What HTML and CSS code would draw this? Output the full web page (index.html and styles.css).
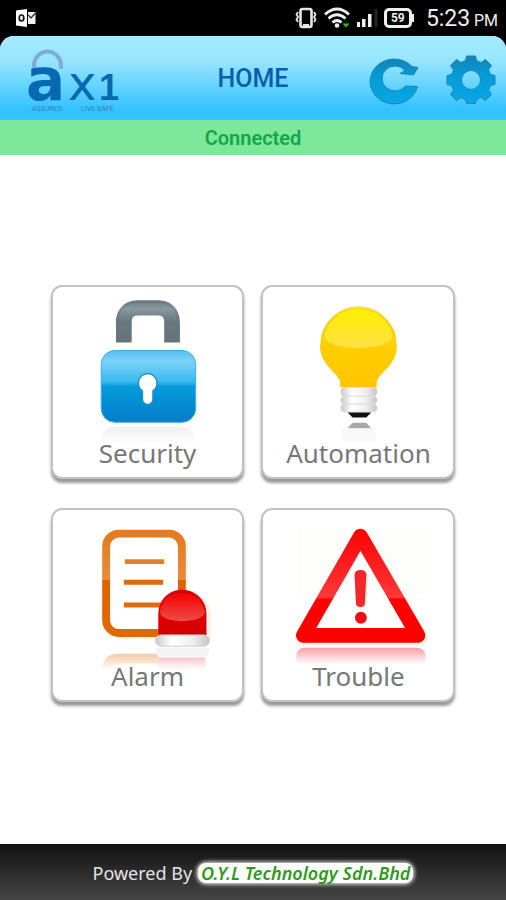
FILE: index.html
```html
<!DOCTYPE html>
<html lang="en">
<head>
<meta charset="utf-8">
<meta name="viewport" content="width=device-width, initial-scale=1">
<title>Home</title>
<link rel="stylesheet" href="styles.css">
</head>
<body>
<div class="status">
  <svg class="status-mail" width="20" height="20" viewBox="0 0 20 20" aria-hidden="true">
    <path d="M0 2.500L11 1v18L0 17.500z" fill="#fff"/>
    <path d="M12 4h7.500v12H12z" fill="#eee"/>
    <path d="M12 7l3 3 4.500-5" fill="none" stroke="#222" stroke-width="1.200"/>
    <ellipse cx="5.500" cy="10" rx="2.300" ry="3" fill="none" stroke="#111" stroke-width="1.700"/>
  </svg>
  <svg width="24" height="22" viewBox="0 0 24 22" aria-hidden="true" fill="none" stroke="#e6e6e6">
    <rect x="6.500" y="2" width="11" height="18" rx="2" stroke-width="2.600"/>
    <path d="M9 18.500h6" stroke-width="3"/>
    <path d="M4 5L2.500 7.500 4 10l-1.500 2.500L4 15M20 5l1.500 2.500L20 10l1.500 2.500L20 15" stroke-width="1.800"/>
  </svg>
  <svg width="26" height="22" viewBox="0 0 26 22" aria-hidden="true" fill="none" stroke="#eee" stroke-width="2.800">
    <path d="M1 7.500Q13-3.500 25 7.500M4.500 11.500Q13 4 21.500 11.500M8.500 15.500Q13 11.500 17.500 15.500"/>
    <circle cx="13" cy="18.500" r="2.300" fill="#eee" stroke="none"/>
    <path d="M18.500 16.500h7L22 20.500z" fill="#2ec516" stroke="none"/>
  </svg>
  <svg width="22" height="22" viewBox="0 0 22 22" aria-hidden="true" fill="#eee">
    <path d="M1 15h3v5H1zM6 12h3.500v8H6zM12 7h3.500v13H12z"/>
    <path d="M18.500 2h3v18h-3z" fill="#252525"/>
  </svg>
  <span class="battery">59</span>
  <span class="clock">5:23 <small>PM</small></span>
</div>

<header class="bar">
  <svg class="logo" width="96" height="64" viewBox="0 0 96 64" role="img" aria-label="ax1 logo">
    <path d="M10 20v-3a13 14 0 0 1 27 0v3" fill="none" stroke="#7fa9dc" stroke-width="4"/>
    <text class="logo-a" x="2" y="51">a</text>
    <text class="logo-x" x="44" y="51">x</text>
    <text class="logo-one" x="75" y="51">1</text>
    <text class="logo-tag" x="8" y="62">ASSURED</text>
    <text class="logo-tag" x="57" y="62">LIVE SAFE</text>
  </svg>
  <h1 class="title">HOME</h1>
  <div class="actions">
    <button class="action" type="button" aria-label="Refresh">
      <svg viewBox="0 0 50 50" aria-hidden="true">
        <defs>
          <linearGradient id="metal" x1="0" y1="0" x2="0" y2="1">
            <stop offset="0" stop-color="#1482b5"/><stop offset=".4" stop-color="#069bd5"/><stop offset="1" stop-color="#07a7e6"/>
          </linearGradient>
        </defs>
        <path d="M48.500 31.500A24 22.500 0 1 1 43 11.500L49 12.500L44.500 20L31 18.500L36 15.500A13 12.500 0 1 0 36.500 31z" fill="url(#metal)" stroke="#1589bd"/>
      </svg>
    </button>
    <button class="action" type="button" aria-label="Settings">
      <svg viewBox="0 0 50 50" aria-hidden="true">
        <path fill-rule="evenodd" fill="url(#metal)" stroke="#1589bd" d="M20.500 1h9l1 4.500 4.500 2 4.500-3 6 6-3 4.500 2 4.500 4.500 1v9l-4.500 1-2 4.500 3 4.500-6 6-4.500-3-4.500 2-1 4h-9l-1-4-4.500-2-4.500 3-6-6 3-4.500-2-4.500-4.500-1v-9l4.500-1 2-4.500-3-4.500 6-6 4.500 3 4.500-2zM25 15.500a9.500 9.500 0 1 0 0 19a9.500 9.500 0 1 0 0-19z"/>
      </svg>
    </button>
  </div>
</header>
<p class="connection" role="status">Connected</p>

<main class="content">
  <div class="tiles">
    <button class="tile" type="button">
      <svg viewBox="0 0 193 193" aria-hidden="true">
        <defs>
          <linearGradient id="steel" x1="0" y1="0" x2="0" y2="1"><stop offset="0" stop-color="#6b7a84"/><stop offset=".2" stop-color="#89979f"/><stop offset=".5" stop-color="#69777f"/><stop offset="1" stop-color="#65737b"/></linearGradient>
          <linearGradient id="lock" x1="0" y1="0" x2="0" y2="1"><stop offset="0" stop-color="#55bdf0"/><stop offset=".15" stop-color="#7dd3f7"/><stop offset=".44" stop-color="#35b8ec"/><stop offset=".5" stop-color="#049cdb"/><stop offset="1" stop-color="#067cc8"/></linearGradient>
          <linearGradient id="lock-shade" x1="0" y1="0" x2="0" y2="1"><stop offset="0" stop-color="#f0f0f0"/><stop offset="1" stop-color="#fff"/></linearGradient>
        </defs>
        <path d="M64 56.500V36C64 22 73 13.500 87 13.500h19C120 13.500 129 22 129 36v20.500h-16V35q0-6-6-6H86q-6 0-6 6v21.500z" fill="url(#steel)"/>
        <path d="M66 34C67 22 75 15.500 87 15.500h19C118 15.500 126 22 127 34" fill="none" stroke="#5d6a73" stroke-opacity=".6"/>
        <rect x="49" y="64.500" width="96" height="73" rx="14" fill="url(#lock)" stroke="#3daae3"/>
        <path d="M91 105.500a9.500 9.500 0 1 1 10.500 0V114a5.250 5.250 0 0 1-10.500 0z" fill="#fff" stroke="#168dca" stroke-width="1.200"/>
        <path d="M49 160v-6q1-12 14-12h67q13 0 14 12v6z" fill="url(#lock-shade)"/>
      </svg>
      <span class="tile-label">Security</span>
    </button>

    <button class="tile" type="button">
      <svg viewBox="0 0 193 193" aria-hidden="true">
        <defs>
          <linearGradient id="bulb" x1="0" y1="0" x2="0" y2="1"><stop offset="0" stop-color="#ffe600"/><stop offset=".5" stop-color="#ffce00"/><stop offset="1" stop-color="#ffc400"/></linearGradient>
          <linearGradient id="glare" x1="0" y1="0" x2="0" y2="1"><stop offset="0" stop-color="#fff000"/><stop offset="1" stop-color="#ffdf45"/></linearGradient>
          <linearGradient id="ring"><stop offset="0" stop-color="#c8c8c8"/><stop offset=".3" stop-color="#fff"/><stop offset=".7" stop-color="#eee"/><stop offset="1" stop-color="#c4c4c4"/></linearGradient>
        </defs>
        <path d="M78.500 102V96C74 85 58 79 58 60A39 39 0 0 1 136 60C136 79 120 85 115.500 96v6z" fill="url(#bulb)"/>
        <path d="M63 47C68 31 82 23 97 23s29 8 34 24c3 10-14 15-34 15s-37-5-34-15z" fill="url(#glare)"/>
        <path d="M60 50a38 38 0 0 1 74 0" fill="none" stroke="#f3ba00" stroke-opacity=".55" stroke-width="2"/>
        <g fill="url(#ring)" stroke="#dadada" stroke-width=".8">
          <rect x="79" y="102" width="37" height="9" rx="4"/><rect x="79" y="111" width="37" height="8" rx="4"/><rect x="79" y="119" width="37" height="8" rx="4"/>
        </g>
        <path d="M86 127.500h24l-5 5H91z" fill="#111"/>
        <path d="M91 138h14l5 5.500H86z" fill="#aaa"/>
        <path d="M80 144h35v12H80z" fill="#f8f8f8"/>
      </svg>
      <span class="tile-label">Automation</span>
    </button>

    <button class="tile" type="button">
      <svg viewBox="0 0 193 193" aria-hidden="true">
        <defs>
          <linearGradient id="paper" gradientUnits="userSpaceOnUse" x1="0" y1="22" x2="0" y2="130"><stop offset="0" stop-color="#e47a20"/><stop offset=".45" stop-color="#e98a3d"/><stop offset=".46" stop-color="#df6200"/><stop offset="1" stop-color="#e06a08"/></linearGradient>
          <linearGradient id="fade-orange" x1="0" y1="0" x2="0" y2="1"><stop offset="0" stop-color="#f6c9a3"/><stop offset="1" stop-color="#fff"/></linearGradient>
          <linearGradient id="fade-pink" x1="0" y1="0" x2="0" y2="1"><stop offset="0" stop-color="#f8c5cb"/><stop offset="1" stop-color="#fff"/></linearGradient>
          <linearGradient id="siren" x1="0" y1="0" x2="0" y2="1"><stop offset="0" stop-color="#c90000"/><stop offset=".3" stop-color="#ea0000"/><stop offset="1" stop-color="#cf0000"/></linearGradient>
          <linearGradient id="siren-glare" x1="0" y1="0" x2="0" y2="1"><stop offset="0" stop-color="#f50000"/><stop offset="1" stop-color="#ef4b4b"/></linearGradient>
        </defs>
        <rect x="56" y="27" width="78" height="100" rx="12" fill="none" stroke="#f8f6ea" stroke-width="7"/>
        <rect x="54" y="24" width="77" height="101" rx="13" fill="#fff" stroke="url(#paper)" stroke-width="8"/>
        <path d="M73 50h40v5H73z" fill="#e57e2b"/><path d="M72 71h40v5H72zM72 94h40v5H72z" fill="#df6b10"/>
        <path d="M110 127v-20a24 24 0 0 1 49 0v22h2" fill="none" stroke="#f7f3e4" stroke-width="3"/>
        <path d="M107 128v-22C107 91 118 81 131 81s25 10 25 25v22z" fill="url(#siren)"/>
        <path d="M109 102c3-12 11-18 22-18s20 6 23 18c2 7-10 11-23 11s-24-4-22-11z" fill="url(#siren-glare)"/>
        <rect x="104" y="127" width="55" height="11.500" rx="5.700" fill="url(#ring)" stroke="#d2d2d2"/>
        <path d="M50 163c0-8 4-17 15-17h42v10H68z" fill="url(#fade-orange)"/>
        <path d="M104 140h55q0 9-5 9h-45q-5 0-5-9z" fill="#f3f3f3"/>
        <path d="M107 150h48v12h-48z" fill="url(#fade-pink)"/>
      </svg>
      <span class="tile-label">Alarm</span>
    </button>

    <button class="tile" type="button">
      <svg viewBox="0 0 193 193" aria-hidden="true">
        <defs>
          <linearGradient id="warn" gradientUnits="userSpaceOnUse" x1="0" y1="19" x2="0" y2="135"><stop offset="0" stop-color="#f00"/><stop offset=".2" stop-color="#fb1515"/><stop offset=".6" stop-color="#ff3838"/><stop offset=".62" stop-color="#fd0000"/><stop offset="1" stop-color="#fd0000"/></linearGradient>
          <linearGradient id="fade-red" x1="0" y1="0" x2="0" y2="1"><stop offset="0" stop-color="#fa9fa7"/><stop offset="1" stop-color="#fff"/></linearGradient>
        </defs>
        <path d="M35 19h133v65q-66 16-133 0z" fill="#fdfdfb"/>
        <path d="M101 29L160 130H43z" fill="none" stroke="#f4f2e2" stroke-width="15" stroke-linejoin="round"/>
        <path d="M99 26.500L157.500 127.500H41z" fill="#fff" stroke="url(#warn)" stroke-width="15" stroke-linejoin="round"/>
        <path d="M95 66q0-3 6-3t6 3l-2 30q0 3-4 3t-4-3z" fill="#efecd9"/>
        <path d="M93 66q0-5 6-5t6 5l-1.500 29q0 3.500-4.500 3.500t-4.500-3.500z" fill="#f3262c"/>
        <circle cx="99.500" cy="109.500" r="6" fill="#f10c12"/>
        <path d="M34 157v-10q1-7 9-7h113q8 0 9 7v10z" fill="url(#fade-red)"/>
      </svg>
      <span class="tile-label">Trouble</span>
    </button>
  </div>
</main>

<footer class="footer">
  <span>Powered By</span>
  <span class="vendor">O.Y.L Technology Sdn.Bhd</span>
</footer>
</body>
</html>
```
FILE: styles.css
```css
* {
  box-sizing: border-box;
}

body {
  margin: 0;
  min-height: 100vh;
  display: flex;
  flex-direction: column;
  background: #fff;
  font-family: Roboto, "Liberation Sans", sans-serif;
}

button {
  border: 0;
  padding: 0;
  background: none;
  font: inherit;
  cursor: pointer;
}

svg {
  display: block;
}

.status {
  display: flex;
  align-items: center;
  gap: 6px;
  height: 36px;
  padding: 0 8px 0 16px;
  background: #000;
  color: #eee;
}

.status-mail {
  margin-right: auto;
}

.battery {
  position: relative;
  width: 28px;
  height: 20px;
  border: 3px solid #eee;
  border-radius: 5px;
  font-size: 12px;
  font-weight: 700;
  line-height: 14px;
  text-align: center;
}

.battery::after {
  content: "";
  position: absolute;
  top: 3px;
  right: -5px;
  width: 2px;
  height: 8px;
  background: #eee;
}

.clock {
  margin-left: 8px;
  padding-top: 4px;
  font-size: 23px;
  line-height: 32px;
  white-space: nowrap;
}

.clock small {
  margin-left: -2px;
  font-size: 16px;
}

.bar {
  display: grid;
  grid-template-columns: 1fr auto 1fr;
  align-items: center;
  height: 84px;
  padding: 0 10px;
  border-radius: 14px 14px 0 0;
  background: linear-gradient(#a5ebff, #96e5ff 30%, #34c2fe 88%, #34c6fc);
  box-shadow: 0 -14px 0 14px #000;
  clip-path: inset(0);
}

.logo {
  margin: 6px 0 0 14px;
  overflow: visible;
}

.logo text {
  fill: #0868b2;
  font-family: "DejaVu Sans", sans-serif;
}

.logo .logo-a {
  font-size: 58px;
  font-weight: 700;
}

.logo .logo-x {
  font-size: 48px;
}

.logo .logo-one {
  font-family: "Liberation Sans", sans-serif;
  font-size: 36px;
  font-weight: 700;
}

.logo .logo-tag {
  fill: #2f83b8;
  font-family: Roboto, sans-serif;
  font-size: 7px;
}

.title {
  margin: 0;
  padding-top: 2px;
  color: #0c5cab;
  font-size: 25px;
  font-weight: 500;
  line-height: 30px;
}

.actions {
  display: flex;
  justify-content: flex-end;
  gap: 27px;
  padding-top: 4px;
}

.action {
  width: 50px;
  height: 50px;
}

.connection {
  margin: 0;
  padding-top: 2px;
  background: #7de89b;
  color: #11a84b;
  font-size: 20px;
  font-weight: 600;
  line-height: 33px;
  text-align: center;
}

.content {
  flex: 1;
  display: flex;
  align-items: center;
  justify-content: center;
  padding: 24px 0 36px;
}

.tiles {
  display: grid;
  grid-template-columns: 1fr 1fr;
  gap: 29px 17px;
  width: 80%;
  max-width: 480px;
}

.tile {
  display: grid;
  border: 2px solid #c2c2c2;
  border-radius: 11px;
  background: #fff;
  box-shadow: 0 4px 3px #999;
}

.tile > * {
  grid-area: 1 / 1;
}

.tile-label {
  align-self: end;
  padding-bottom: 8px;
  color: #777;
  font-family: "Noto Sans", sans-serif;
  font-size: 26px;
  line-height: 32px;
}

.footer {
  display: flex;
  align-items: center;
  justify-content: center;
  gap: 6px;
  height: 56px;
  padding-top: 2px;
  background: linear-gradient(#111, #464646);
  color: #e4e4e4;
  font-family: "Noto Sans", sans-serif;
  font-size: 18px;
  line-height: 20px;
}

.vendor {
  padding: 0 3px;
  border-radius: 8px;
  background: #fff;
  box-shadow: 0 0 4px 1px #fff;
  color: #2f9a1c;
  font-style: italic;
  font-weight: 600;
}
```
